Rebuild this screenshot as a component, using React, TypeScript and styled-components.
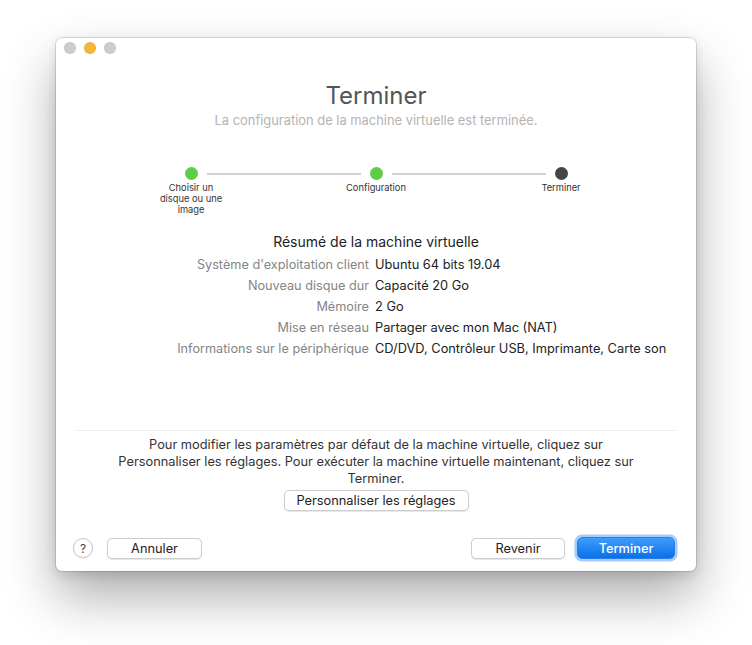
import styled, { createGlobalStyle } from "styled-components";

const GlobalStyle = createGlobalStyle`
  html, body {
    margin: 0;
    padding: 0;
    background: #ffffff;
  }
  body {
    font-family: Inter, "Liberation Sans", "Noto Sans", sans-serif;
    -webkit-font-smoothing: antialiased;
  }
`;

const Page = styled.div`
  width: 752px;
  height: 645px;
  padding: 38px 0 0 56px;
  box-sizing: border-box;
  overflow: hidden;
`;

const Window = styled.div`
  width: 640px;
  height: 533px;
  background: #ffffff;
  border-radius: 6px;
  box-shadow: 0 0 0 1px rgba(0, 0, 0, 0.12), 0 26px 52px rgba(0, 0, 0, 0.32),
    0 4px 12px rgba(0, 0, 0, 0.12);
  display: flex;
  flex-direction: column;
  box-sizing: border-box;
  padding-bottom: 12px;
`;

const TitleBar = styled.div`
  height: 20px;
  display: flex;
  align-items: center;
  gap: 8px;
  padding-left: 8px;
`;

const Light = styled.span<{ $color: string }>`
  width: 12px;
  height: 12px;
  border-radius: 50%;
  background: ${(p) => p.$color};
  box-shadow: inset 0 0 0 0.5px rgba(0, 0, 0, 0.08);
`;

const Title = styled.h1`
  margin: 24px 0 0;
  font-size: 24px;
  line-height: 28px;
  font-weight: 400;
  color: #555555;
  text-align: center;
`;

const Subtitle = styled.p`
  margin: 3px 0 0;
  font-size: 12.9px;
  line-height: 16px;
  color: #b4b4b4;
  text-align: center;
`;

const Stepper = styled.div`
  margin-top: 38px;
  display: flex;
  flex-direction: column;
  align-items: center;
`;

const Track = styled.div`
  width: 383px;
  display: flex;
  align-items: center;
`;

const Dot = styled.span<{ $done: boolean }>`
  width: 13px;
  height: 13px;
  border-radius: 50%;
  flex: none;
  background: ${(p) => (p.$done ? "#5dcd45" : "#454545")};
`;

const Line = styled.span`
  flex: 1;
  height: 2px;
  margin: 0 9px;
  background: #d3d3d3;
`;

const Labels = styled.div`
  width: 470px;
  margin-top: 2px;
  display: grid;
  grid-template-columns: repeat(3, 100px);
  justify-content: space-between;
`;

const StepLabel = styled.span`
  font-size: 9.3px;
  line-height: 11px;
  color: #333333;
  text-align: center;
  padding: 0 14px;
`;

const SummaryTitle = styled.h2`
  margin: 18px 0 0;
  font-size: 14px;
  line-height: 18px;
  font-weight: 400;
  color: #222222;
  text-align: center;
`;

const Summary = styled.div`
  margin-top: 3px;
  display: grid;
  grid-template-columns: 313px 1fr;
  column-gap: 6px;
`;

const Key = styled.span`
  font-size: 12.7px;
  line-height: 21px;
  color: #858585;
  text-align: right;
  white-space: nowrap;
`;

const Value = styled.span`
  font-size: 12.8px;
  line-height: 21px;
  color: #222222;
  white-space: nowrap;
`;

const Spacer = styled.div`
  flex: 1;
`;

const Separator = styled.div`
  height: 1px;
  margin: 0 20px;
  background: #efefef;
`;

const Note = styled.p`
  margin: 5px auto 0;
  width: 540px;
  font-size: 12.8px;
  line-height: 17px;
  color: #333333;
  text-align: center;
`;

const Center = styled.div`
  display: flex;
  justify-content: center;
  margin-top: 3px;
`;

const Footer = styled.div`
  margin-top: 26px;
  padding: 0 21px 0 17px;
  display: flex;
  align-items: center;
`;

const Help = styled.button`
  width: 20px;
  height: 20px;
  border-radius: 50%;
  border: 1px solid #c9c9c9;
  background: #ffffff;
  box-shadow: 0 0.5px 1px rgba(0, 0, 0, 0.12);
  color: #444444;
  font-family: inherit;
  font-size: 12px;
  padding: 0;
  display: flex;
  align-items: center;
  justify-content: center;
  margin-right: 14px;
`;

const Button = styled.button<{ $width: number; $primary?: boolean }>`
  width: ${(p) => p.$width}px;
  height: ${(p) => (p.$primary ? 22 : 21)}px;
  border-radius: 5px;
  font-family: inherit;
  font-size: 12.8px;
  font-weight: ${(p) => (p.$primary ? 500 : 400)};
  padding: 0;
  color: ${(p) => (p.$primary ? "#ffffff" : "#222222")};
  background: ${(p) =>
    p.$primary ? "linear-gradient(#3e9dfb, #0b6fe9)" : "#ffffff"};
  border: ${(p) => (p.$primary ? "1px solid #2a7ee8" : "1px solid #cdcdcd")};
  box-shadow: ${(p) =>
    p.$primary
      ? "0 0 0 2.5px rgba(90, 160, 245, 0.55)"
      : "0 0.5px 1px rgba(0, 0, 0, 0.1)"};
`;

const Push = styled.div`
  flex: 1;
`;

const ButtonGap = styled.div`
  width: 12px;
`;

const rows: [string, string][] = [
  ["Système d'exploitation client", "Ubuntu 64 bits 19.04"],
  ["Nouveau disque dur", "Capacité 20 Go"],
  ["Mémoire", "2 Go"],
  ["Mise en réseau", "Partager avec mon Mac (NAT)"],
  ["Informations sur le périphérique", "CD/DVD, Contrôleur USB, Imprimante, Carte son"],
];

const steps = [
  { label: "Choisir un disque ou une image", done: true },
  { label: "Configuration", done: true },
  { label: "Terminer", done: false },
];

export default function App() {
  return (
    <>
      <GlobalStyle />
      <Page>
        <Window>
          <TitleBar>
            <Light $color="#cdcdcd" />
            <Light $color="#f7b53b" />
            <Light $color="#cdcdcd" />
          </TitleBar>
          <Title>Terminer</Title>
          <Subtitle>La configuration de la machine virtuelle est terminée.</Subtitle>
          <Stepper>
            <Track>
              {steps.map((s, i) => (
                <>
                  {i > 0 && <Line key={"l" + i} />}
                  <Dot key={"d" + i} $done={s.done} />
                </>
              ))}
            </Track>
            <Labels>
              {steps.map((s) => (
                <StepLabel key={s.label}>{s.label}</StepLabel>
              ))}
            </Labels>
          </Stepper>
          <SummaryTitle>Résumé de la machine virtuelle</SummaryTitle>
          <Summary>
            {rows.map(([k, v]) => (
              <>
                <Key key={k}>{k}</Key>
                <Value key={v}>{v}</Value>
              </>
            ))}
          </Summary>
          <Spacer />
          <Separator />
          <Note>
            Pour modifier les paramètres par défaut de la machine virtuelle, cliquez sur
            <br />
            Personnaliser les réglages. Pour exécuter la machine virtuelle maintenant, cliquez sur
            <br />
            Terminer.
          </Note>
          <Center>
            <Button $width={185}>Personnaliser les réglages</Button>
          </Center>
          <Footer>
            <Help>?</Help>
            <Button $width={95}>Annuler</Button>
            <Push />
            <Button $width={94}>Revenir</Button>
            <ButtonGap />
            <Button $width={98} $primary>
              Terminer
            </Button>
          </Footer>
        </Window>
      </Page>
    </>
  );
}
